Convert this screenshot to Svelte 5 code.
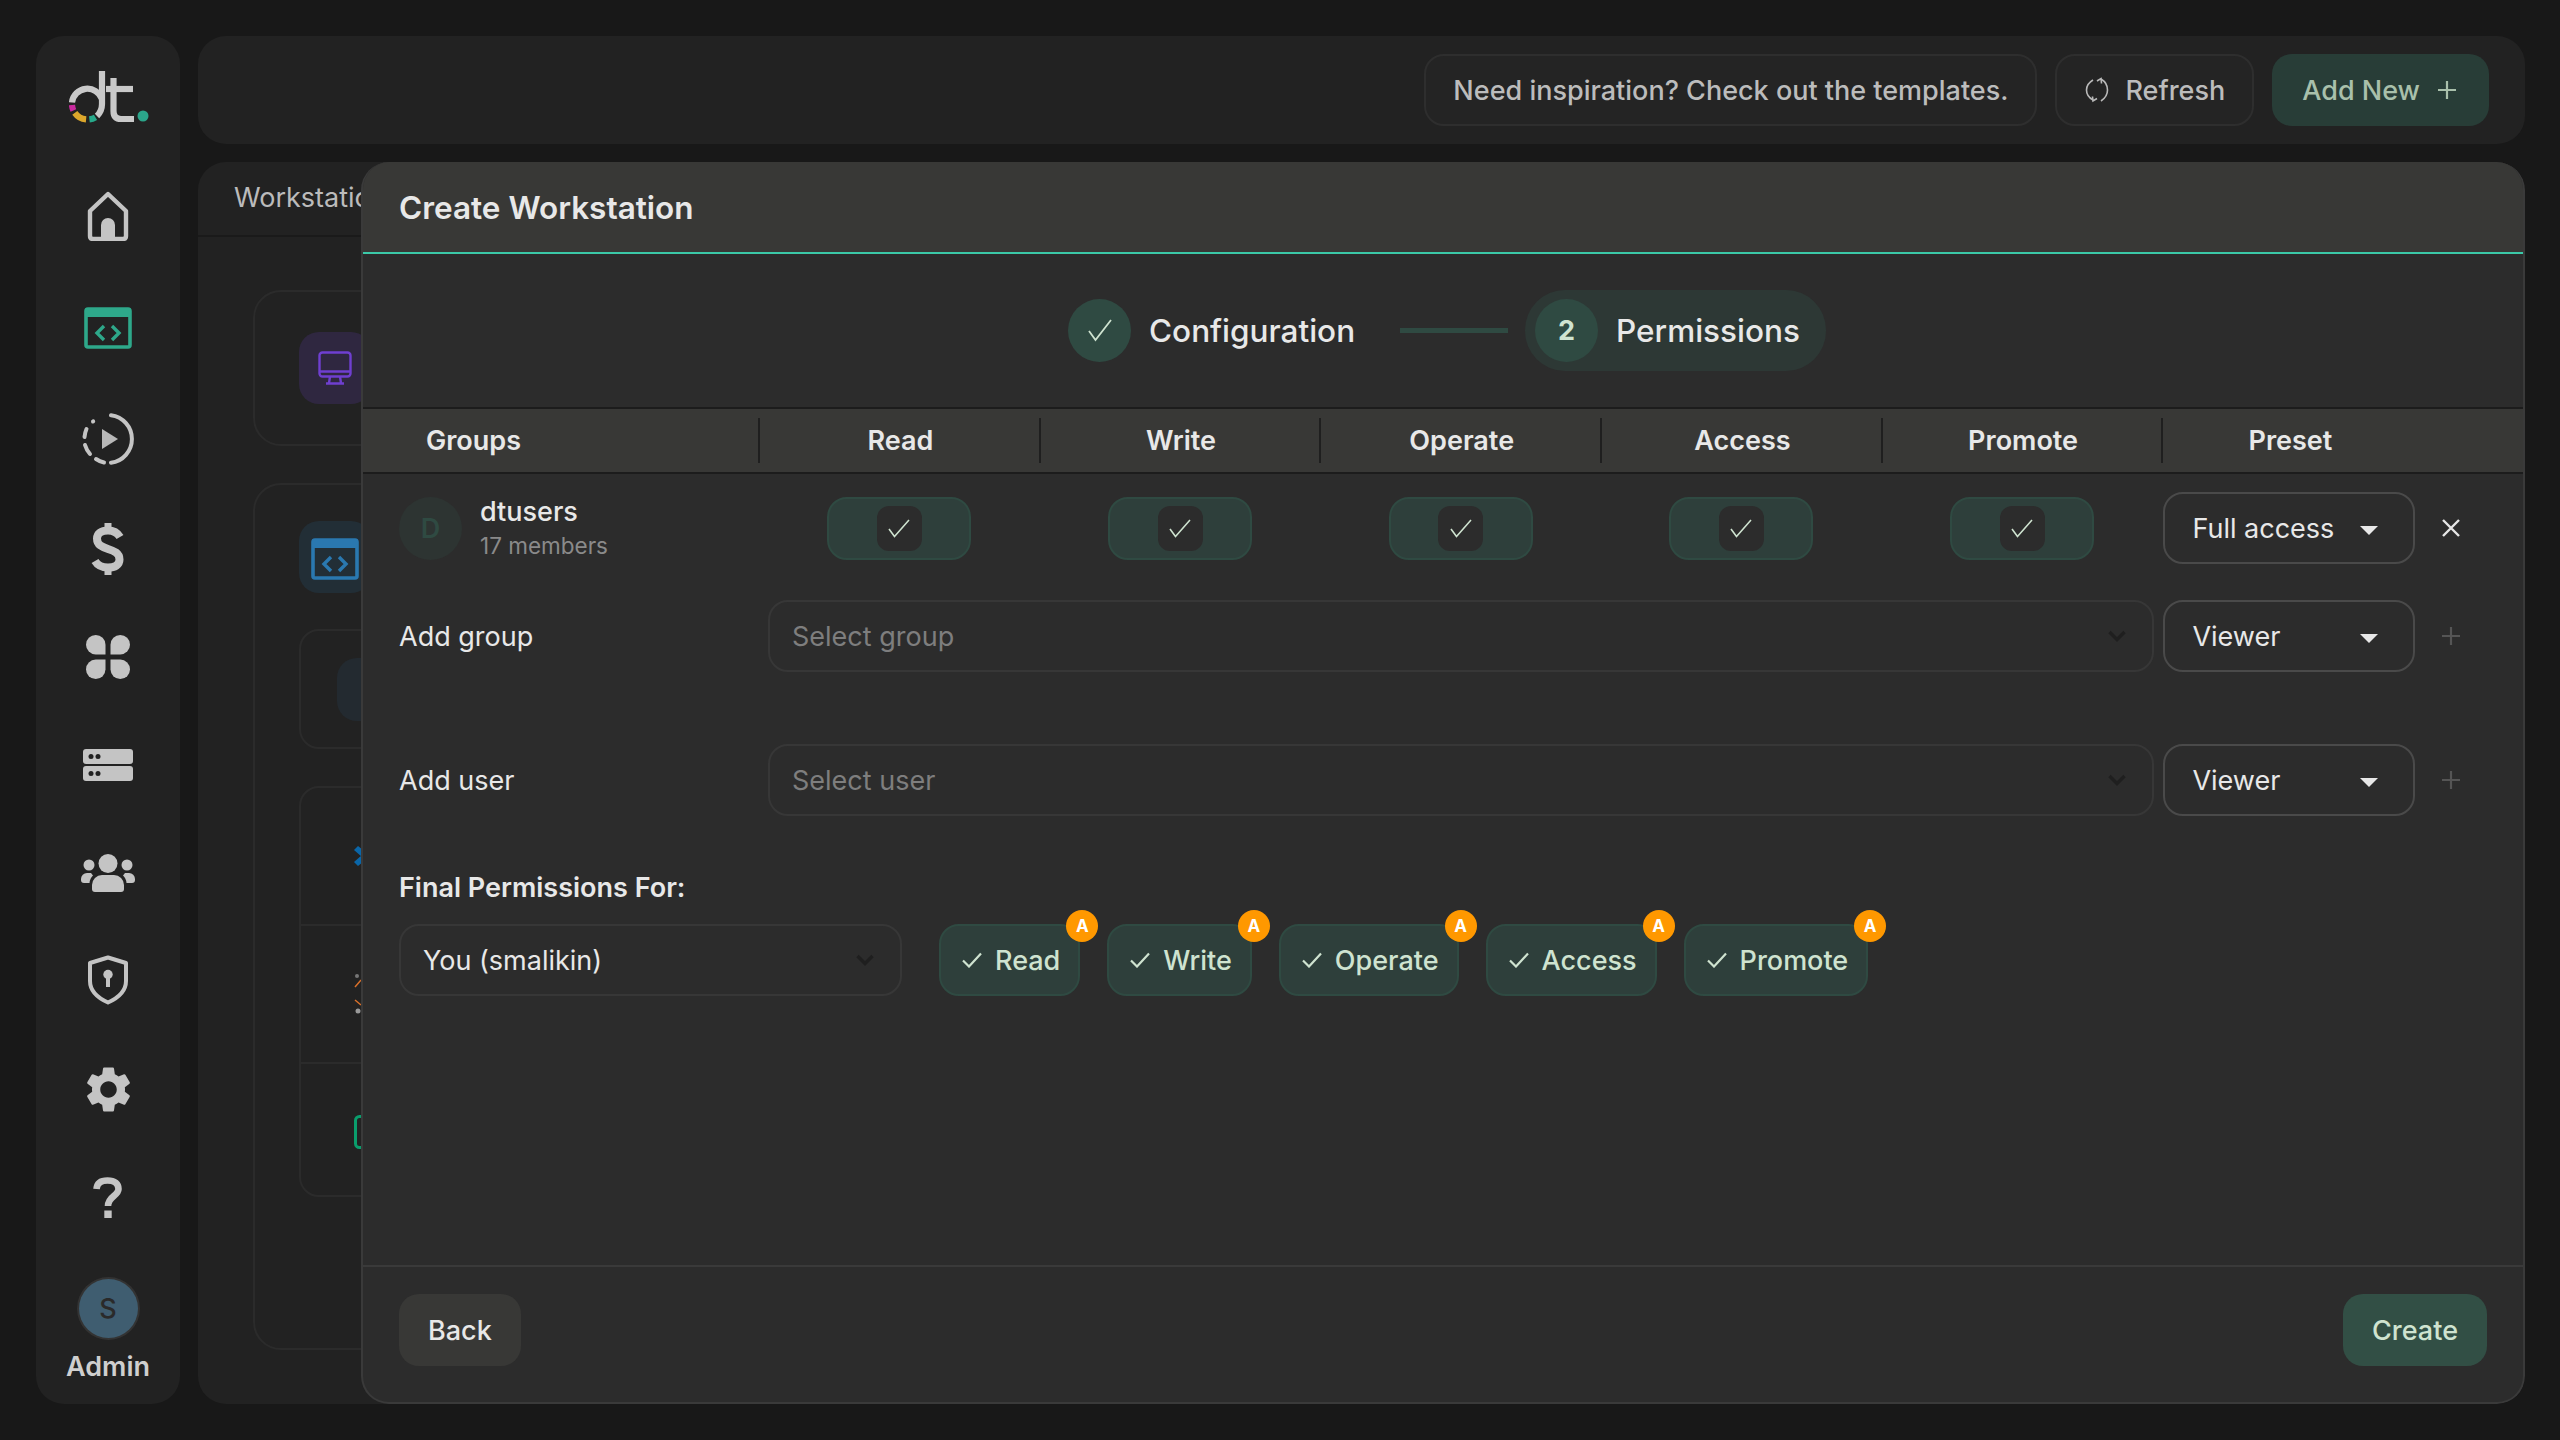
<script>
  const perms = ["Read", "Write", "Operate", "Access", "Promote"];
  const petal = "M19.5 19.5H9.7A9.75 9.75 0 1 1 19.5 9.7Z";
</script>

<div class="page">
  <aside class="rail">
    <svg class="logo" width="80" height="56" viewBox="0 0 80 56" fill="none" stroke-width="6.2">
      <path d="M3 34.5A15.5 15.5 0 0 1 33 31" stroke="#c9c9c9" />
      <path d="M33 3V36C33 41 31 45 28 48" stroke="#c9c9c9" />
      <path d="M3 37A15.5 15.5 0 0 0 4.4 42.5" stroke="#c92a9f" />
      <path d="M5.8 44.9A15.5 15.5 0 0 0 17.1 51.4" stroke="#dca72c" />
      <path d="M20.4 51.4A15.5 15.5 0 0 0 26.5 49.3" stroke="#27a98a" />
      <path d="M44.5 10V43Q44.5 51 52 51H65" stroke="#c9c9c9" />
      <path d="M37 21H64" stroke="#c9c9c9" />
      <circle cx="74" cy="48" r="5.5" fill="#2ba58a" />
    </svg>

    <nav class="nav">
      <div class="navitem">
        <svg width="42" height="50" viewBox="0 0 42 50" fill="none">
          <path d="M21 3L39 20V45Q39 48 36 48H6Q3 48 3 45V20Z" stroke="#c4c4c4" stroke-width="4.4" stroke-linejoin="round" />
          <path d="M14 48V34A7 7 0 0 1 28 34V48Z" fill="#c4c4c4" />
        </svg>
      </div>
      <div class="navitem">
        <svg width="48" height="42" viewBox="0 0 48 42" fill="none">
          <rect x="2" y="2" width="44" height="38" rx="2" stroke="#2ea88a" stroke-width="3.6" />
          <rect x="1" y="1" width="46" height="9" rx="2" fill="#2ea88a" />
          <path d="M20 19L13 26L20 33M28 19L35 26L28 33" stroke="#2ea88a" stroke-width="3.4" />
        </svg>
      </div>
      <div class="navitem">
        <svg width="52" height="52" viewBox="0 0 52 52" fill="none" stroke="#c4c4c4" stroke-width="4" stroke-linecap="round">
          <path d="M29 2.2A24 24 0 0 1 29 49.8" />
          <path d="M11 8.5L11.2 8.4M4.5 16A24 24 0 0 0 2.5 24M3 32A24 24 0 0 0 8 41M14 46A24 24 0 0 0 22 49.5" />
          <path d="M20 16L36 26L20 36Z" fill="#b8b8b8" stroke="none" />
        </svg>
      </div>
      <div class="navitem">
        <svg width="34" height="56" viewBox="0 0 34 56" fill="none" stroke="#c4c4c4">
          <path d="M29 16C26 11 21 9.5 17 9.5C10 9.5 6 12.5 6 17.5C6 24 11 26 17 28C23 30 28.5 32 28.5 38.5C28.5 44 24 46.5 17 46.5C12 46.5 7 45 4 40" stroke-width="8" />
          <path d="M17 2V9M17 47V54" stroke-width="7" />
        </svg>
      </div>
      <div class="navitem">
        <svg width="44" height="44" viewBox="0 0 44 44" fill="#c4c4c4">
          <path d={petal} />
          <path d={petal} transform="matrix(-1 0 0 1 44 0)" />
          <path d={petal} transform="matrix(1 0 0 -1 0 44)" />
          <path d={petal} transform="matrix(-1 0 0 -1 44 44)" />
        </svg>
      </div>
      <div class="navitem">
        <svg width="50" height="32" viewBox="0 0 50 32">
          <rect x="0" y="0" width="50" height="15" rx="3" fill="#c4c4c4" />
          <rect x="0" y="17" width="50" height="15" rx="3" fill="#c4c4c4" />
          <circle cx="8" cy="7.5" r="2.5" fill="#222" /><circle cx="15" cy="7.5" r="2.5" fill="#222" />
          <circle cx="8" cy="24.5" r="2.5" fill="#222" /><circle cx="15" cy="24.5" r="2.5" fill="#222" />
        </svg>
      </div>
      <div class="navitem">
        <svg width="54" height="38" viewBox="0 0 54 38" fill="#c4c4c4">
          <circle cx="27" cy="9.5" r="9.5" />
          <circle cx="8" cy="11" r="5.5" /><circle cx="46" cy="11" r="5.5" />
          <path d="M11 35V31A10 10 0 0 1 21 21H33A10 10 0 0 1 43 31V35A3 3 0 0 1 40 38H14A3 3 0 0 1 11 35Z" />
          <path d="M0 25A6 6 0 0 1 6 19H10L12 21.5Q9 24 8.5 29H3A3 3 0 0 1 0 26Z" />
          <path d="M54 25A6 6 0 0 0 48 19H44L42 21.5Q45 24 45.5 29H51A3 3 0 0 0 54 26Z" />
        </svg>
      </div>
      <div class="navitem">
        <svg width="42" height="50" viewBox="0 0 42 50" fill="none">
          <path d="M21 2.5L39 8V26C39 36 31 43 21 47.5C11 43 3 36 3 26V8Z" stroke="#c4c4c4" stroke-width="4" stroke-linejoin="round" />
          <circle cx="21" cy="19.5" r="4.7" fill="#c4c4c4" />
          <rect x="19" y="20" width="4" height="12" fill="#c4c4c4" />
        </svg>
      </div>
      <div class="navitem">
        <svg width="55" height="55" viewBox="0 0 24 24" fill="#c4c4c4">
          <path d="M19.14 12.94c.04-.3.06-.61.06-.94 0-.32-.02-.64-.07-.94l2.03-1.58c.18-.14.23-.41.12-.61l-1.92-3.32c-.12-.22-.37-.29-.59-.22l-2.39.96c-.5-.38-1.03-.7-1.62-.94l-.36-2.54c-.04-.24-.24-.41-.48-.41h-3.84c-.24 0-.43.17-.47.41l-.36 2.54c-.59.24-1.13.57-1.62.94l-2.39-.96c-.22-.08-.47 0-.59.22L2.74 8.87c-.12.21-.08.47.12.61l2.03 1.58c-.05.3-.09.63-.09.94s.02.64.07.94l-2.03 1.58c-.18.14-.23.41-.12.61l1.92 3.32c.12.22.37.29.59.22l2.39-.96c.5.38 1.03.7 1.62.94l.36 2.54c.05.24.24.41.48.41h3.84c.24 0 .44-.17.47-.41l.36-2.54c.59-.24 1.13-.56 1.62-.94l2.39.96c.22.08.47 0 .59-.22l1.92-3.32c.12-.22.07-.47-.12-.61l-2.01-1.58zM12 15.6c-1.98 0-3.6-1.62-3.6-3.6s1.62-3.6 3.6-3.6 3.6 1.62 3.6 3.6-1.62 3.6-3.6 3.6z" />
        </svg>
      </div>
      <div class="navitem">
        <svg width="30" height="42" viewBox="0 0 30 42" fill="none" stroke="#c4c4c4" stroke-width="6.6">
          <path d="M3.5 12C4 6 8 3.5 14.5 3.5C22 3.5 25.5 7 25.5 12C25.5 19 15 19 15 29" />
          <path d="M15 33.5V41" stroke-width="7.4" />
        </svg>
      </div>
    </nav>

    <div class="me">S</div>
    <div class="mename">Admin</div>
  </aside>

  <main class="main">
    <header class="topbar">
      <button class="btn ghost">Need inspiration? Check out the templates.</button>
      <button class="btn ghost refresh">
        <svg width="24" height="28" viewBox="0 0 24 28" fill="none" stroke="#b9b9b9" stroke-width="1.6">
          <path d="M8 4C3 7 1.5 10 1.5 14C1.5 18 3.5 21.5 8 24" />
          <path d="M16 3C21 6 22.5 10 22.5 14C22.5 18 20.5 22 16 25" />
          <path d="M12 5L16 2.5L16.5 7.5M12 22.5L8 25L7.5 20.5" />
        </svg>
        Refresh
      </button>
      <button class="btn addnew">
        Add New
        <svg width="20" height="20" viewBox="0 0 20 20" stroke="#a9c0ab" stroke-width="2.2"><path d="M10 1V19M1 10H19" /></svg>
      </button>
    </header>

    <section class="content">
      <div class="tab">Workstations</div>

      <div class="card first">
        <div class="iconbox purple">
          <svg width="34" height="34" viewBox="0 0 34 34" fill="none" stroke="#6f3fd0" stroke-width="2.4">
            <rect x="1.5" y="1.5" width="31" height="24" rx="3" />
            <path d="M1.5 20.5H32.5M12 25.5L11 32M22 25.5L23 32M8 32.5H26" />
          </svg>
        </div>
      </div>

      <div class="card second">
        <div class="iconbox blue">
          <svg class="shift" width="48" height="42" viewBox="0 0 48 42" fill="none">
            <rect x="2" y="2" width="44" height="38" rx="2" stroke="#2a78b0" stroke-width="3.6" />
            <rect x="1" y="1" width="46" height="9" rx="2" fill="#2a78b0" />
            <path d="M20 19L13 26L20 33M28 19L35 26L28 33" stroke="#2a78b0" stroke-width="3.4" />
          </svg>
        </div>
        <div class="inner boxa"><div class="iconbox small"></div></div>
        <div class="inner boxb">
          <div class="innerrow">
            <svg width="34" height="24" viewBox="0 0 34 24"><path d="M0 6L4 2L14 10L8 13ZM0 18L4 22L14 14L8 11Z" fill="#0a66a8" /></svg>
          </div>
          <div class="innerrow">
            <svg width="34" height="40" viewBox="0 0 34 40" fill="none">
              <circle cx="3" cy="2" r="2" fill="#777" /><circle cx="4" cy="37" r="2.5" fill="#999" />
              <path d="M1 13L7 6M1 26L7 31" stroke="#d9702a" stroke-width="1.5" />
            </svg>
          </div>
          <div class="innerrow">
            <svg width="34" height="34" viewBox="0 0 34 34" fill="none"><rect x="1.5" y="1.5" width="31" height="31" rx="4" stroke="#0a9d6c" stroke-width="3" /></svg>
          </div>
        </div>
      </div>

      <div class="modal">
        <div class="modalhead">Create Workstation</div>

        <div class="modalbody">
          <div class="stepper">
            <div class="step">
              <span class="stepnum">
                <svg width="24" height="23" viewBox="0 0 24 23" fill="none" stroke="#cfe3d0" stroke-width="1.8"><path d="M1 12L7.5 21L23 1" /></svg>
              </span>
              Configuration
            </div>
            <div class="stepline"></div>
            <div class="step active">
              <span class="stepnum">2</span>
              Permissions
            </div>
          </div>

          <div class="grid thead">
            <div class="th groups">Groups</div>
            {#each perms as p}
              <div class="th">{p}</div>
            {/each}
            <div class="th">Preset</div>
          </div>

          <div class="grid row first-row">
            <div class="who">
              <span class="avatar">D</span>
              <div>
                <div class="name">dtusers</div>
                <div class="members">17 members</div>
              </div>
            </div>
            {#each perms as p}
              <div class="toggle" title={p}>
                <span class="knob">
                  <svg width="22" height="19" viewBox="0 0 22 19" fill="none" stroke="#cfe3d0" stroke-width="1.6"><path d="M1 10L6.5 17.5L21 1" /></svg>
                </span>
              </div>
            {/each}
            <div class="preset">Full access <i class="caret"></i></div>
            <svg class="rowicon" width="20" height="20" viewBox="0 0 20 20" stroke="#e6e6e6" stroke-width="2.4"><path d="M2 2L18 18M18 2L2 18" /></svg>
          </div>

          <div class="grid row add">
            <div class="addlabel">Add group</div>
            <div class="select wide">
              <span class="placeholder">Select group</span>
              <svg width="18" height="12" viewBox="0 0 18 12" fill="none" stroke="#1f1f1f" stroke-width="3.4"><path d="M1.5 2L9 9.5L16.5 2" /></svg>
            </div>
            <div class="preset">Viewer <i class="caret"></i></div>
            <svg class="rowicon" width="20" height="20" viewBox="0 0 20 20" stroke="#555" stroke-width="2.2"><path d="M10 1V19M1 10H19" /></svg>
          </div>

          <div class="grid row add second-add">
            <div class="addlabel">Add user</div>
            <div class="select wide">
              <span class="placeholder">Select user</span>
              <svg width="18" height="12" viewBox="0 0 18 12" fill="none" stroke="#1f1f1f" stroke-width="3.4"><path d="M1.5 2L9 9.5L16.5 2" /></svg>
            </div>
            <div class="preset">Viewer <i class="caret"></i></div>
            <svg class="rowicon" width="20" height="20" viewBox="0 0 20 20" stroke="#555" stroke-width="2.2"><path d="M10 1V19M1 10H19" /></svg>
          </div>

          <div class="final">
            <div class="finallabel">Final Permissions For:</div>
            <div class="finalrow">
              <div class="select you">
                <span>You (smalikin)</span>
                <svg width="18" height="12" viewBox="0 0 18 12" fill="none" stroke="#1f1f1f" stroke-width="3.4"><path d="M1.5 2L9 9.5L16.5 2" /></svg>
              </div>
              <div class="chips">
                {#each perms as p}
                  <div class="chip">
                    <svg width="20" height="16" viewBox="0 0 20 16" fill="none" stroke="#cfe3d0" stroke-width="2.2"><path d="M1 8.5L7 14.5L19 1.5" /></svg>
                    {p}
                    <span class="badge">A</span>
                  </div>
                {/each}
              </div>
            </div>
          </div>
        </div>

        <div class="modalfoot">
          <button class="btn back">Back</button>
          <button class="btn create">Create</button>
        </div>
      </div>
    </section>
  </main>
</div>

<style>
  :global(body) {
    margin: 0;
    background: #181818;
    font-family: Inter, "Noto Sans", sans-serif;
  }

  .page {
    display: flex;
    gap: 18px;
    height: 1440px;
    box-sizing: border-box;
    padding: 36px 35px 36px 36px;
    color: #e8e8e8;
    font-size: 27px;
    line-height: 1;
  }

  /* left rail */
  .rail {
    width: 144px;
    flex: none;
    background: #222;
    border-radius: 28px;
    display: flex;
    flex-direction: column;
    align-items: center;
  }
  .logo {
    margin-top: 32px;
    margin-left: 2px;
    flex: none;
  }
  .nav {
    margin-top: 38px;
    display: flex;
    flex-direction: column;
    align-items: center;
  }
  .navitem {
    height: 108px;
    display: flex;
    align-items: center;
    justify-content: center;
  }
  /* icons are not evenly spaced */
  .navitem:nth-child(2) { height: 116px; }
  .navitem:nth-child(3) { height: 106px; }
  .navitem:nth-child(4) { height: 114px; }
  .navitem:nth-child(5) { height: 102px; }
  .navitem:nth-child(6) { height: 114px; }
  .navitem:nth-child(7) { height: 102px; }
  .navitem:nth-child(8) { height: 112px; }
  .navitem:nth-child(9) { height: 106px; }
  .navitem:nth-child(10) { height: 112px; }
  .me {
    margin-top: 25px;
    width: 59px;
    height: 59px;
    border-radius: 50%;
    background: #3f5d70;
    box-shadow: 0 0 0 2px #333;
    color: #2a2a2a;
    font-size: 27px;
    font-weight: 500;
    display: flex;
    align-items: center;
    justify-content: center;
  }
  .mename {
    margin-top: 15px;
    color: #cfcfcf;
    font-weight: 600;
    font-size: 27px;
  }

  /* right side */
  .main {
    flex: 1;
    min-width: 0;
    display: flex;
    flex-direction: column;
    gap: 18px;
  }
  .topbar {
    height: 108px;
    flex: none;
    box-sizing: border-box;
    background: #222;
    border-radius: 28px;
    display: flex;
    justify-content: flex-end;
    align-items: center;
    gap: 18px;
    padding-right: 36px;
  }

  .btn {
    height: 72px;
    box-sizing: border-box;
    border-radius: 20px;
    border: 2px solid transparent;
    font: inherit;
    font-size: 27px;
    font-weight: 500;
    line-height: 1;
    padding: 0 27px;
    display: flex;
    align-items: center;
    gap: 16px;
  }
  .ghost {
    background: #242424;
    border-color: #2e2e2e;
    color: #bcbcbc;
    padding: 0 27px;
  }
  .refresh {
    padding: 0 27px 0 28px;
  }
  .addnew {
    background: #283d37;
    color: #a9c0ab;
    padding: 0 30px 0 28px;
    gap: 17px;
  }

  /* page behind the drawer */
  .content {
    flex: 1;
    position: relative;
    overflow: hidden;
    background: #222;
    border-radius: 28px;
  }
  .tab {
    height: 75px;
    box-sizing: border-box;
    padding: 22px 0 0 36px;
    border-bottom: 2px solid #1a1a1a;
    color: #bbb;
  }
  .card {
    box-sizing: border-box;
    margin: 0 50px 0 55px;
    padding: 0 44px;
    border: 2px solid #2b2b2b;
    border-radius: 28px;
  }
  .card.first {
    margin-top: 53px;
    height: 156px;
    padding-top: 40px;
  }
  .card.second {
    margin-top: 37px;
    height: 867px;
    padding-top: 36px;
  }
  .iconbox {
    width: 72px;
    height: 72px;
    border-radius: 20px;
    display: flex;
    align-items: center;
    justify-content: center;
  }
  .purple {
    background: #2f2740;
  }
  .blue {
    background: #222e36;
  }
  .shift {
    margin-top: 4px;
  }
  .inner {
    box-sizing: border-box;
    border: 2px solid #2b2b2b;
    border-radius: 20px;
  }
  .boxa {
    margin-top: 36px;
    height: 120px;
    padding: 27px 36px;
  }
  .iconbox.small {
    height: 63px;
    background: #232a30;
  }
  .boxb {
    margin-top: 37px;
    height: 411px;
  }
  .innerrow {
    height: 136px;
    padding-left: 53px;
    display: flex;
    align-items: center;
    border-bottom: 2px solid #2b2b2b;
  }
  .innerrow:last-child {
    border-bottom: 0;
  }

  /* drawer */
  .modal {
    position: absolute;
    top: 0;
    left: 163px;
    right: 0;
    bottom: 0;
    box-sizing: border-box;
    background: #2c2c2c;
    border: 2px solid #3a3a3a;
    border-top: 0;
    border-radius: 28px;
    display: flex;
    flex-direction: column;
    overflow: hidden;
  }
  .modalhead {
    height: 92px;
    flex: none;
    box-sizing: border-box;
    background: #383836;
    border-bottom: 2px solid #3bc9a8;
    padding: 30px 0 0 36px;
    font-size: 31.5px;
    font-weight: 600;
    color: #e8e8e8;
  }
  .modalbody {
    flex: 1;
    min-height: 0;
  }

  .stepper {
    height: 153px;
    box-sizing: border-box;
    padding: 0 0 0 705px;
    display: flex;
    align-items: center;
    font-size: 31.5px;
    font-weight: 500;
  }
  .step {
    display: flex;
    align-items: center;
    gap: 18px;
  }
  .step.active {
    height: 81px;
    margin-left: 17px;
    padding: 0 26px 0 10px;
    border-radius: 40px;
    background: #2d3835;
  }
  .stepnum {
    width: 63px;
    height: 63px;
    border-radius: 50%;
    background: #2f4a42;
    color: #cfe3d0;
    font-size: 27px;
    font-weight: 700;
    display: flex;
    align-items: center;
    justify-content: center;
  }
  .stepline {
    width: 108px;
    height: 5px;
    margin-left: 45px;
    background: #2f4a42;
  }

  .grid {
    display: grid;
    grid-template-columns: 397px repeat(5, 280.7px) 254px 1fr;
    align-items: center;
  }
  .thead {
    height: 63px;
    box-sizing: content-box;
    background: #383836;
    border-top: 2px solid #1c1c1c;
    border-bottom: 2px solid #1c1c1c;
    margin-bottom: 18px;
    font-weight: 600;
  }
  .th {
    height: 45px;
    display: flex;
    align-items: center;
    justify-content: center;
    border-left: 2px solid #1f1f1f;
    margin-left: -2px;
  }
  .th.groups {
    border-left: 0;
    margin-left: 0;
    justify-content: flex-start;
    padding-left: 63px;
  }

  .who {
    display: flex;
    align-items: center;
    gap: 18px;
    padding-left: 36px;
  }
  .avatar {
    width: 63px;
    height: 63px;
    border-radius: 50%;
    background: #2d3432;
    color: #2f4a42;
    font-weight: 600;
    display: flex;
    align-items: center;
    justify-content: center;
  }
  .name {
    font-weight: 500;
  }
  .members {
    margin-top: 10px;
    font-size: 22.5px;
    color: #8a8a8a;
  }

  .toggle {
    justify-self: center;
    width: 144px;
    height: 63px;
    margin-left: -2px;
    box-sizing: border-box;
    background: #2e3f3b;
    border: 2px solid #2f4a42;
    border-radius: 20px;
    display: flex;
    align-items: center;
    justify-content: center;
  }
  .knob {
    width: 45px;
    height: 45px;
    background: #2c2c2c;
    border-radius: 12px;
    display: flex;
    align-items: center;
    justify-content: center;
  }

  .preset {
    width: 252px;
    height: 72px;
    box-sizing: border-box;
    border: 2px solid #4a4a4a;
    border-radius: 20px;
    padding: 0 35px 0 27px;
    display: flex;
    align-items: center;
    justify-content: space-between;
  }
  .caret {
    width: 0;
    height: 0;
    border-left: 9px solid transparent;
    border-right: 9px solid transparent;
    border-top: 9px solid #e8e8e8;
    margin-top: 4px;
  }
  .rowicon {
    margin-left: 24px;
  }

  .row.add {
    margin-top: 36px;
  }
  .row.second-add {
    margin-top: 72px;
  }
  .addlabel {
    padding-left: 36px;
  }
  .select {
    height: 72px;
    box-sizing: border-box;
    border: 2px solid #373737;
    border-radius: 20px;
    display: flex;
    align-items: center;
    justify-content: space-between;
    padding: 0 26px 0 22px;
  }
  .select.wide {
    grid-column: 2 / 7;
    margin: 0 9px 0 8px;
  }
  .placeholder {
    color: #7e7e7e;
  }

  .final {
    margin-top: 58px;
    padding-left: 36px;
  }
  .finallabel {
    font-weight: 600;
  }
  .finalrow {
    display: flex;
    align-items: center;
    gap: 37px;
    margin-top: 23px;
  }
  .select.you {
    width: 503px;
    flex: none;
  }
  .chips {
    display: flex;
    gap: 27px;
  }
  .chip {
    position: relative;
    height: 72px;
    box-sizing: border-box;
    padding: 0 18px 0 21px;
    background: #2e3f3b;
    border: 2px solid #2f4a42;
    border-radius: 20px;
    color: #cfe3d0;
    font-weight: 500;
    display: flex;
    align-items: center;
    gap: 13px;
  }
  .badge {
    position: absolute;
    top: -16px;
    right: -20px;
    width: 32px;
    height: 32px;
    border-radius: 50%;
    background: #ff9800;
    color: #fff;
    font-size: 17px;
    font-weight: 700;
    display: flex;
    align-items: center;
    justify-content: center;
  }

  .modalfoot {
    flex: none;
    display: flex;
    justify-content: space-between;
    border-top: 2px solid #3a3a3a;
    padding: 27px 36px 36px;
  }
  .back {
    background: #383836;
    color: #e8e8e8;
  }
  .create {
    background: #324f45;
    color: #cfe3d0;
  }
</style>
